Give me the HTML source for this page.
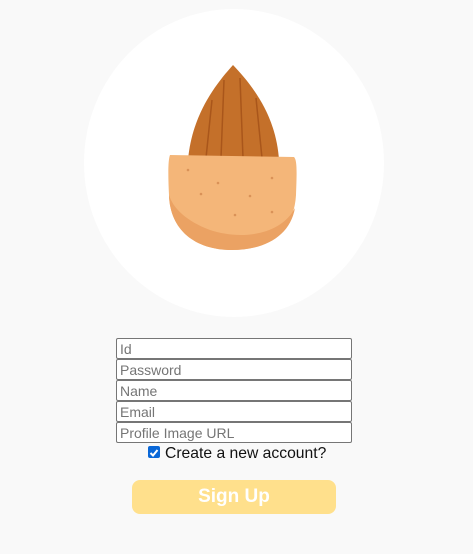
<!DOCTYPE html>
<html><head><style>
body{margin:0;width:473px;height:554px;background:#f9f9f9;font-family:"Liberation Sans",Arial,sans-serif;position:relative;overflow:hidden}
.c{position:absolute;left:84px;top:9px;width:300px;height:308px;border-radius:50%;background:#fff}
input.t{position:absolute;left:116px;width:236px;height:21px;box-sizing:border-box;border:1px solid #767676;border-radius:2px;padding:0 3px;font:14px "Liberation Sans",Arial,sans-serif;background:#fff;margin:0}
input.t::placeholder{color:#757575}
.cb{position:absolute;left:148px;top:446px;width:12px;height:12px;background:#0a68d8;border-radius:2px}
.lbl{position:absolute;left:165px;top:445px;font-size:15.7px;color:#111}
.btn{position:absolute;left:132px;top:480px;width:204px;height:34px;background:#ffe08c;border-radius:8px;color:#fff;font-weight:bold;font-size:19px;text-align:center;line-height:34px}
</style></head><body>
<div class="c"></div>
<svg style="position:absolute;left:0;top:0" width="473" height="330">
<path d="M233 65 C215 85 192 115 188 160 L279 160 C276 115 252 85 233 65Z" fill="#c4702a"/>
<g stroke="#a9561b" stroke-width="1.5" fill="none">
<path d="M212 100 L206 158"/><path d="M224 80 L221 158"/><path d="M240 78 L243 158"/><path d="M256 98 L262 158"/></g>
<path d="M170 155 L294 157 C297 160 297 170 296 195 C294 232 268 250 232 250 C195 250 170 230 169 195 C168 175 168 160 170 155Z" fill="#f4b679"/>
<path d="M169 195 C170 230 195 250 232 250 C265 250 290 236 295 208 C280 236 240 240 210 230 C186 221 173 208 169 195Z" fill="#eba263"/>
<g fill="#d99258"><circle cx="188" cy="170" r="1.3"/><circle cx="218" cy="183" r="1.3"/><circle cx="201" cy="194" r="1.3"/><circle cx="250" cy="196" r="1.3"/><circle cx="272" cy="178" r="1.3"/><circle cx="235" cy="215" r="1.3"/><circle cx="272" cy="212" r="1.3"/></g>
</svg>
<input class="t" style="top:338px" placeholder="Id">
<input class="t" style="top:359px" placeholder="Password">
<input class="t" style="top:380px" placeholder="Name">
<input class="t" style="top:401px" placeholder="Email">
<input class="t" style="top:422px" placeholder="Profile Image URL">
<div class="cb"><svg width="12" height="12"><path d="M2.5 6 L5 8.5 L9.5 3" stroke="#fff" stroke-width="2" fill="none"/></svg></div>
<div class="lbl">Create a new account?</div>
<div class="btn">Sign Up</div>
</body></html>
